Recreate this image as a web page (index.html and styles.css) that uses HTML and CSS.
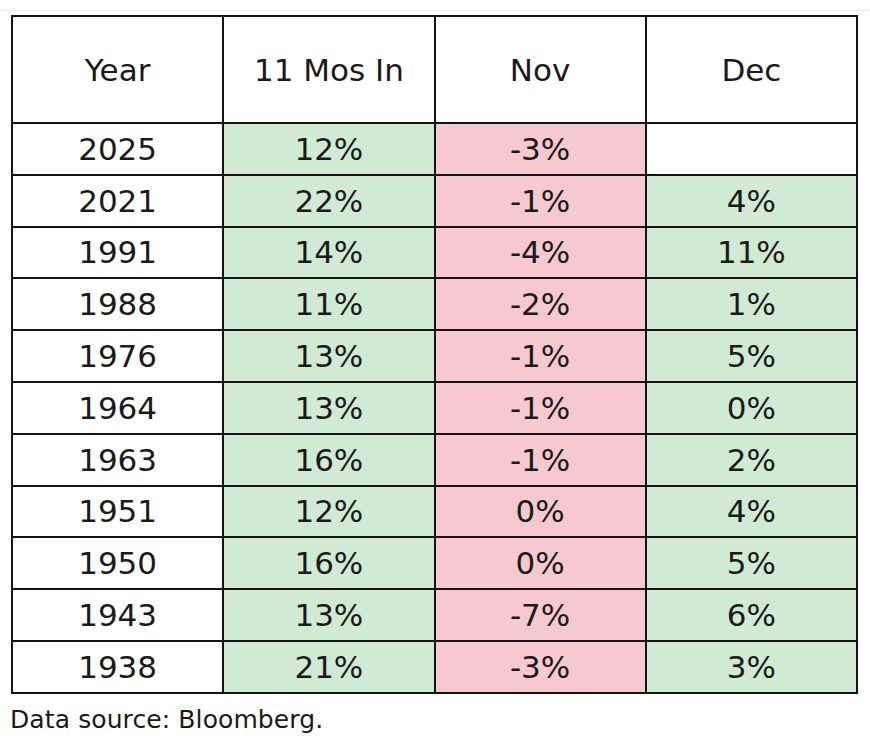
FILE: index.html
```html
<!DOCTYPE html>
<html>
<head>
<meta charset="utf-8">
<link rel="stylesheet" href="styles.css">
</head>
<body>
<div class="page">
  <table class="data">
    <thead>
      <tr><th>Year</th><th>11 Mos In</th><th>Nov</th><th>Dec</th></tr>
    </thead>
    <tbody>
      <tr><td>2025</td><td class="up">12%</td><td class="down">-3%</td><td></td></tr>
      <tr><td>2021</td><td class="up">22%</td><td class="down">-1%</td><td class="up">4%</td></tr>
      <tr><td>1991</td><td class="up">14%</td><td class="down">-4%</td><td class="up">11%</td></tr>
      <tr><td>1988</td><td class="up">11%</td><td class="down">-2%</td><td class="up">1%</td></tr>
      <tr><td>1976</td><td class="up">13%</td><td class="down">-1%</td><td class="up">5%</td></tr>
      <tr><td>1964</td><td class="up">13%</td><td class="down">-1%</td><td class="up">0%</td></tr>
      <tr><td>1963</td><td class="up">16%</td><td class="down">-1%</td><td class="up">2%</td></tr>
      <tr><td>1951</td><td class="up">12%</td><td class="down">0%</td><td class="up">4%</td></tr>
      <tr><td>1950</td><td class="up">16%</td><td class="down">0%</td><td class="up">5%</td></tr>
      <tr><td>1943</td><td class="up">13%</td><td class="down">-7%</td><td class="up">6%</td></tr>
      <tr><td>1938</td><td class="up">21%</td><td class="down">-3%</td><td class="up">3%</td></tr>
    </tbody>
  </table>
  <p class="source">Data source: Bloomberg.</p>
</div>
</body>
</html>
```
FILE: styles.css
```css
html, body {
  margin: 0;
  padding: 0;
  background: #ffffff;
}
.page {
  margin-top: 10px;
  border-top: 1px solid #eeeeee;
  padding: 4px 0 0 11px;
  font-family: "DejaVu Sans", Verdana, sans-serif;
  color: #1a1a1a;
}
.data {
  border-collapse: collapse;
  width: 847px;
  table-layout: fixed;
}
.data th, .data td {
  border: 2px solid #141414;
  text-align: center;
  font-weight: normal;
  font-size: 31px;
  padding: 0;
}
.data th {
  height: 105px;
}
.data td {
  height: 49.8px;
}
.data td.up {
  background: #d0ead3;
}
.data td.down {
  background: #f5c9ce;
}
.source {
  margin: 11px 0 0 -1px;
  font-size: 25px;
  letter-spacing: 0.1px;
  color: #1a1a1a;
}
```
